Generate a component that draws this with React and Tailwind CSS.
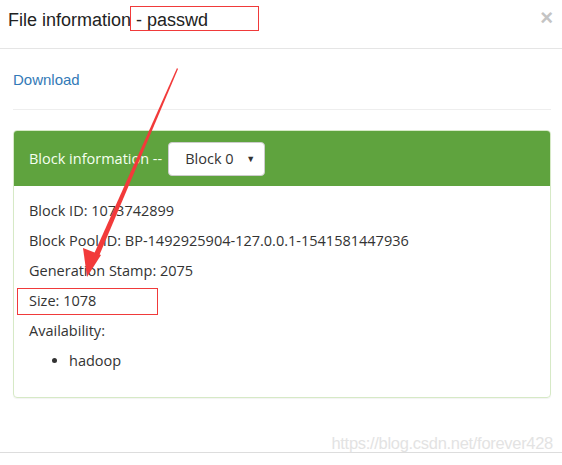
const rows = [
  'Block ID: 1073742899',
  'Block Pool ID: BP-1492925904-127.0.0.1-1541581447936',
  'Generation Stamp: 2075',
  'Size: 1078',
];

export default function App() {
  return (
    <div className="relative w-[562px] h-[465px] bg-white overflow-hidden">
      {/* modal header */}
      <div className="flex items-start justify-between h-[49px] pt-[10px] pl-[8px] pr-[9px] border-b border-[#e5e5e5]">
        <h4 className="text-[18px] leading-[20px] text-[#222] font-['Liberation_Sans',Arial,sans-serif]">File information - passwd</h4>
        <span className="text-[22px] leading-[16px] text-[#c4c4c4] font-['Liberation_Sans',Arial,sans-serif] font-bold">×</span>
      </div>

      {/* modal body */}
      <div className="px-[13px] pr-[11px] font-['Open_Sans','Noto_Sans',sans-serif] text-[14.5px] text-[#333]">
        <div className="h-[61px] flex items-center border-b border-[#eee]">
          <a className="text-[#337ab7] font-['Liberation_Sans',Arial,sans-serif] text-[15px] mt-[2px]">Download</a>
        </div>

        <div className="mt-[20px] border border-[#d6e9c6] rounded-[4px] shadow-[0_1px_1px_rgba(0,0,0,0.05)]">
          <div className="h-[55px] bg-[#5fa33e] rounded-t-[3px] flex items-center pl-[15px] text-white">
            <span className="text-[#f5fff0] mr-[6px]">Block information --</span>
            <div className="w-[97px] h-[34px] bg-white rounded-[4px] border border-[#ccc] flex items-center justify-between pl-[16px] pr-[9px] text-[#333]">
              <span>Block 0</span>
              <span className="text-[9px]">▼</span>
            </div>
          </div>
          <div className="pl-[15px] pt-[10px] pb-[21px] leading-[30px]">
            {rows.map((r) => (
              <div key={r}>{r}</div>
            ))}
            <div>Availability:</div>
            <ul className="list-disc pl-[40px]">
              <li>hadoop</li>
            </ul>
          </div>
        </div>
      </div>

      {/* bottom rule + watermark */}
      <div className="absolute left-0 right-0 top-[452px] border-t border-[#ddd]" />
      <span className="absolute right-[9px] top-[431px] text-[16.5px] text-[#e3e3e3] font-['Liberation_Sans',Arial,sans-serif] tracking-[-0.3px]">
        https://blog.csdn.net/forever428
      </span>

      {/* red annotations */}
      <div className="absolute left-[130px] top-[6px] w-[129px] h-[25px] border border-[#f03a3a]" />
      <div className="absolute left-[17px] top-[288px] w-[141px] h-[27px] border border-[#f03a3a]" />
      <svg className="absolute left-0 top-0" width="562" height="465" viewBox="0 0 562 465">
        <polygon points="177,68 178,69 99,256 94,254" fill="#f23a3a" />
        <polygon points="87,277 83,248 101,255" fill="#f23a3a" />
      </svg>
    </div>
  );
}
